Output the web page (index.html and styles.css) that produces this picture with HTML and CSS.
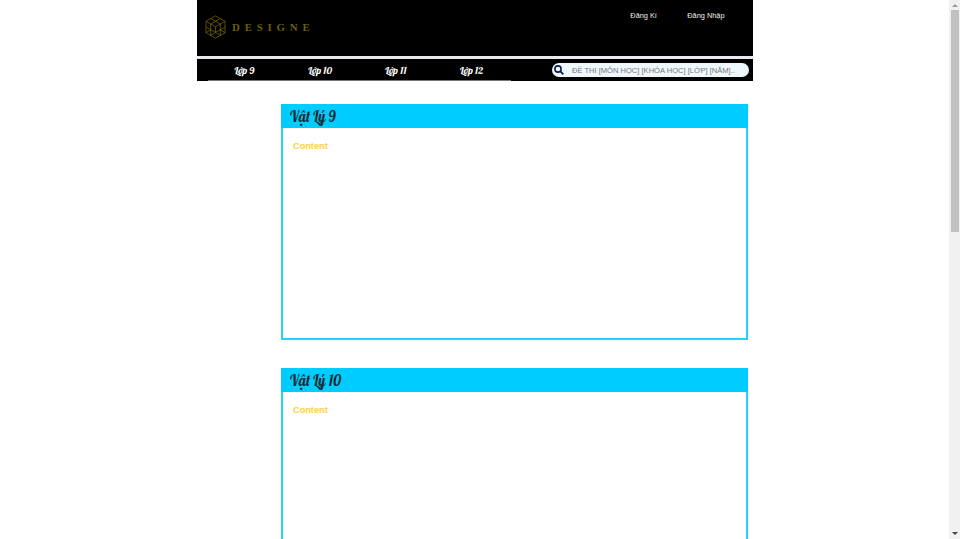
FILE: index.html
```
<!DOCTYPE html>
<html lang="vi">
<head>
<meta charset="utf-8">
<title>Designe</title>
<link rel="stylesheet" href="styles.css">
</head>
<body>
<div class="page">
  <header class="header">
    <a class="logo">
      <svg class="mark" viewBox="0 0 22 26" fill="none" stroke="#75650b" stroke-width="0.8">
        <path d="M11 1.300 21 7v12l-10 5.700L1 19V7zM6 4.200l5 2.800 5-2.800M6 9.900l5-2.900 5 2.900-5 2.900zM1 7l5 2.900v6l5 2.800 5-2.800v-6L21 7M11 12.800v5.900M1 13l5 2.900v6M21 13l-5 2.900v6M1 19l5-3.100M21 19l-5-3.100M6 21.800l5-3.100 5 3.100"/>
      </svg>
      <span class="brand">DESIGNE</span>
    </a>
    <nav class="account"><a>Đăng Kí</a><a>Đăng Nhập</a></nav>
  </header>
  <div class="navbar">
    <ul class="menu">
      <li>Lớp 9</li><li>Lớp 10</li><li>Lớp 11</li><li>Lớp 12</li>
    </ul>
    <div class="search">
      <svg viewBox="0 0 10 10" fill="none" stroke="#0b1c50"><circle cx="4" cy="4" r="3.1" stroke-width="1.6"/><path d="M6.400 6.400 9.300 9.300" stroke-width="1.900"/></svg>
      <span>ĐỀ THI [MÔN HỌC] [KHÓA HỌC] [LỚP] [NĂM]..</span>
    </div>
  </div>
  <main class="cards">
    <section class="card"><h2><span>Vật Lý 9</span></h2><p>Content</p></section>
    <section class="card"><h2><span>Vật Lý 10</span></h2><p>Content</p></section>
  </main>
</div>
<div class="scrollbar"><i class="up"></i><i class="thumb"></i><i class="down"></i></div>
</body>
</html>
```
FILE: styles.css
```
* { box-sizing: border-box; }
body {
  margin: 0;
  height: 539px;
  overflow: hidden;
  display: flex;
  background: #fff;
  font-family: "Liberation Sans", sans-serif;
}
.page { width: 556.4px; height: 539px; overflow: hidden; margin-left: 197px; flex: none; }
.header {
  height: 56px;
  background: #000;
  display: flex;
  justify-content: space-between;
}
.logo { display: flex; padding: 14px 0 0 8px; }
.mark { width: 21px; height: 26px; }
.brand {
  margin: 7px 0 0 6px;
  font: bold 11px/13px "Liberation Serif", serif;
  letter-spacing: 4.900px;
  color: #6d5e08;
  transform: scaleX(.985);
  transform-origin: left;
}
.account {
  display: flex;
  padding: 10px 29.200px 0 0;
  font-size: 8px;
  line-height: 11px;
  color: #eee;
}
.account a { transform: scaleX(.92); transform-origin: right; }
.account a + a { margin-left: 27px; }
.navbar {
  height: 22.400px;
  margin-top: 3px;
  background: #000;
  box-shadow: 0 -3px #e9e7ef;
  display: flex;
  justify-content: space-between;
}
.menu {
  list-style: none;
  margin: 0 0 0 11px;
  padding: 0;
  width: 303px;
  height: 22px;
  border-bottom: 1px solid #777;
  display: grid;
  grid-template-columns: repeat(4, 1fr);
  text-align: center;
  color: #fff;
  font: 10px/23px Lobster, cursive;
}
.menu li { padding-right: 3px; white-space: nowrap; }
.search {
  margin: 4px 4.400px 0 0;
  width: 197px;
  height: 14px;
  border-radius: 7px;
  background: #f0f8ff;
  display: flex;
  align-items: center;
  padding-left: 2px;
  color: #757575;
  font-size: 8px;
  white-space: nowrap;
}
.search span { transform: scaleX(.944); transform-origin: left; }
.search svg { width: 10px; height: 10px; margin-right: 8px; flex: none; }
.cards { padding: 22.600px 5.400px 0 84px; }
.card {
  height: 236px;
  margin-bottom: 28px;
  border: 2px solid #27d0fc;
  border-top: 0;
}
.card h2 {
  margin: 0 -2px;
  padding-left: 9px;
  height: 24px;
  background: #00ccff;
  color: #142a30;
  font: 15px/25px Lobster, cursive;
}
.card h2 span { display: inline-block; transform: scaleX(.945); transform-origin: left; }
.card p {
  margin: 12px 0 0 10px;
  font-size: 9.200px;
  line-height: 12px;
  font-weight: bold;
  color: #ffd045;
}
.scrollbar {
  width: 11px;
  height: 539px;
  margin-left: auto;
  background: #f1f1f1;
  display: flex;
  flex-direction: column;
  align-items: center;
}
.up, .down { border: 3px solid transparent; }
.up { margin-top: 1px; border-bottom-color: #999; }
.thumb { width: 8px; height: 222px; margin-top: 3px; background: #c1c1c1; }
.down { margin-top: auto; margin-bottom: 1px; border-top-color: #444; }
```
